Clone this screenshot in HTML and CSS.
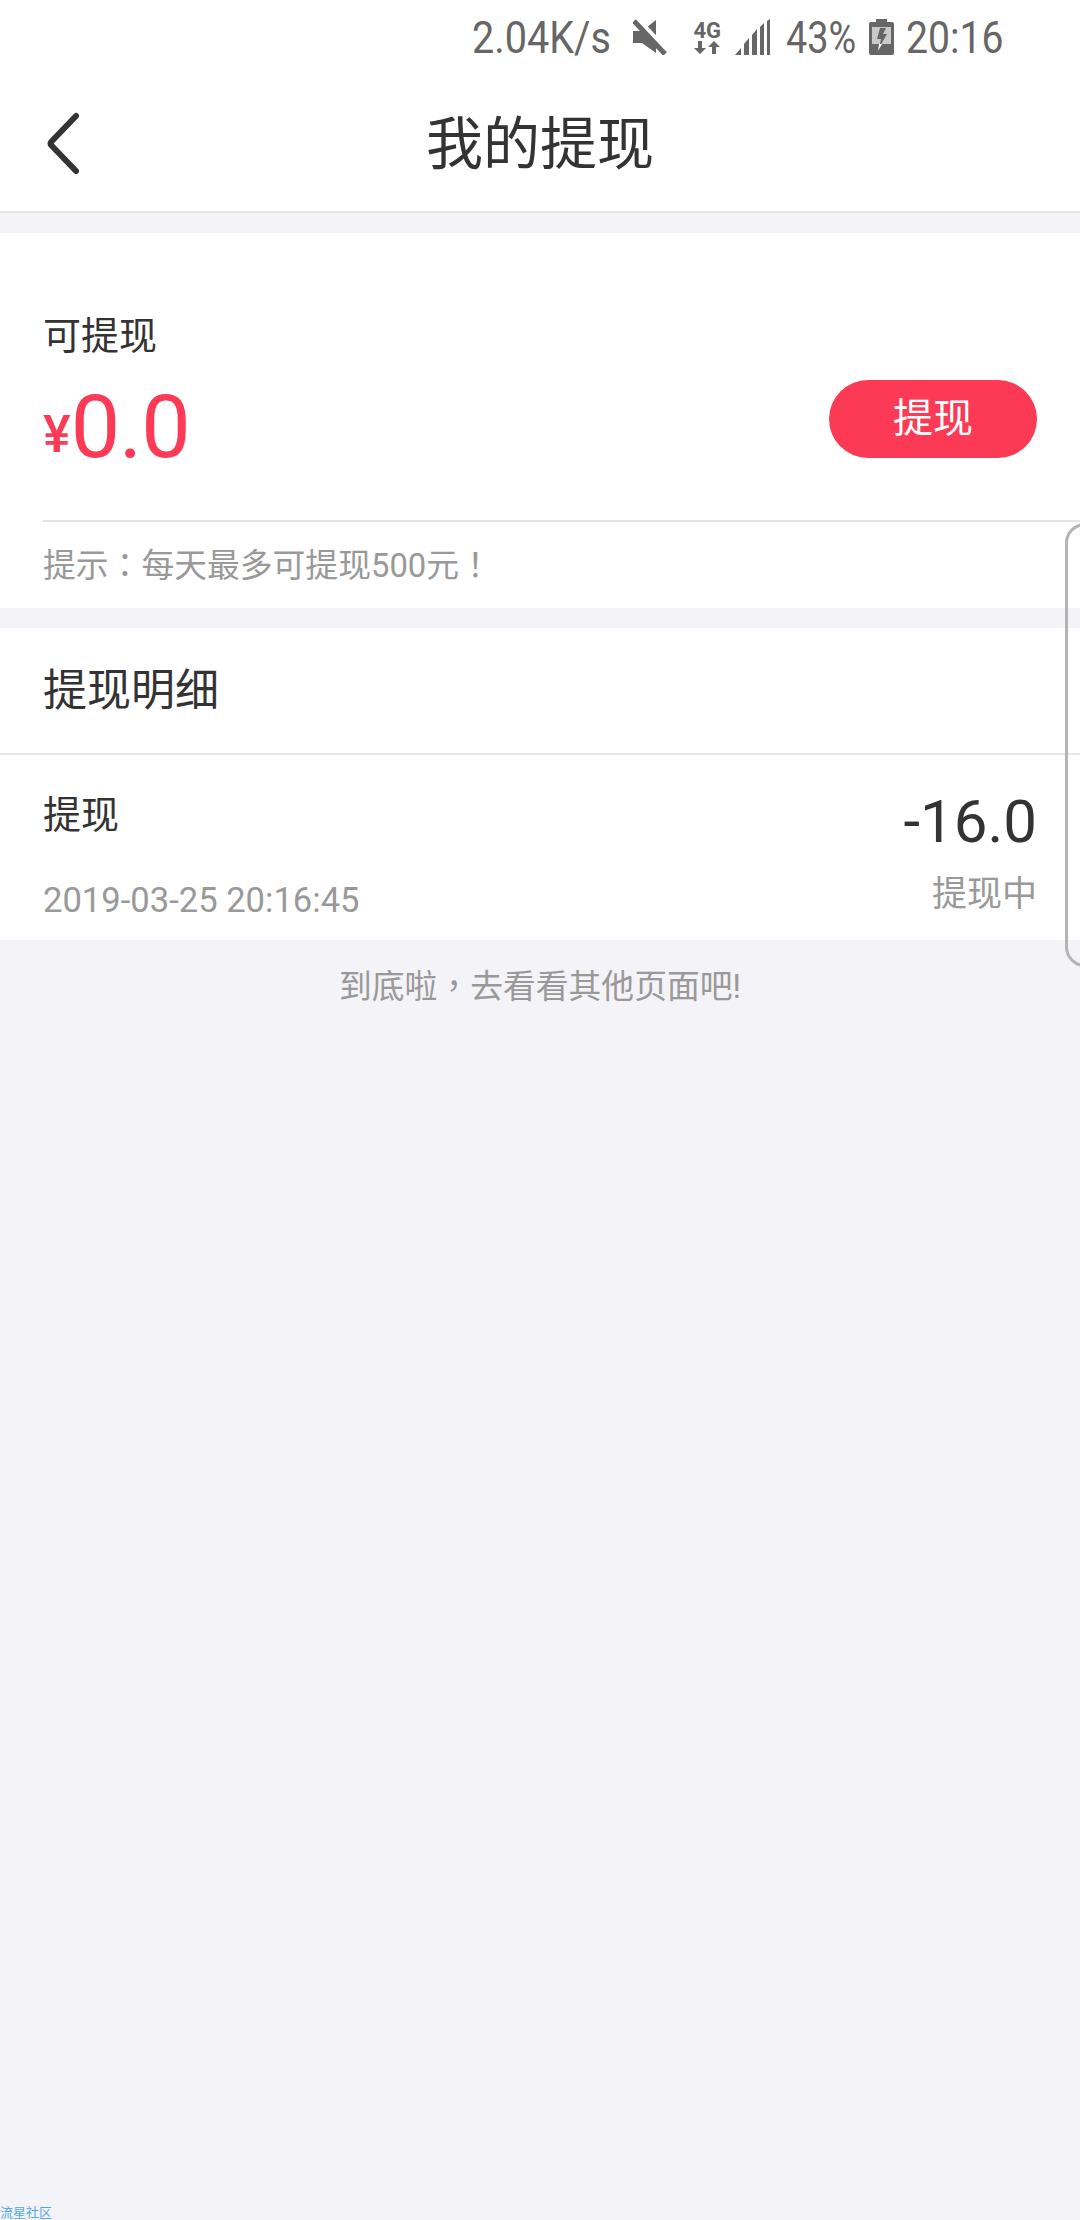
FILE: index.html
```html
<!doctype html>
<html>
  <head>
    <meta charset="utf-8">
    <title>我的提现</title>
    <link rel="stylesheet" href="styles.css">
  </head>
  <body>
    <div class="status">
      <span class="st-text speed">2.04K/s</span>
      <svg class="ic-mute" width="34" height="36" viewBox="0 0 34 36">
        <path d="M0 12h9L23 1v33L9 24H0z" fill="#666"/>
        <path d="M4 1l30 32" stroke="#fff" stroke-width="7"/>
        <path d="M1 2l31 33" stroke="#666" stroke-width="5"/>
      </svg>
      <div class="net">
        <span class="net-label">4G</span>
        <svg width="26" height="13" viewBox="0 0 26 13">
          <path d="M4 0h4v7h4l-6 6-6-6h4zM18 13h4V6h4l-6-6-6 6h4z" fill="#666"/>
        </svg>
      </div>
      <svg class="ic-signal" width="36" height="37" viewBox="0 0 36 37">
        <path d="M0 36l6-7v7zM9 25l5-6v17H9zM17 16l5-6v26h-5zM25 8l4-4v32h-4zM32 2l3-2v36h-3z" fill="#666"/>
      </svg>
      <span class="st-text pct">43%</span>
      <svg class="ic-batt" width="25" height="36" viewBox="0 0 25 36">
        <path d="M7 0h11v3h5q2 0 2 2v29q0 2-2 2H2q-2 0-2-2V5q0-2 2-2h5z" fill="#666"/>
        <rect x="3" y="8" width="19" height="17" fill="#c9c9c9"/>
        <path d="M11 9h6l-3 6h4l-8 14 2-9H8z" fill="#666"/>
        <path d="M10 25h3l-4 7z" fill="#fff"/>
      </svg>
      <span class="st-text time">20:16</span>
    </div>

    <header class="topbar">
      <svg class="back" width="36" height="64" viewBox="0 0 36 64">
        <path d="M32 4L7.5 29.5q-2 2 0 4L32 59" fill="none" stroke="#333" stroke-width="6" stroke-linecap="round" stroke-linejoin="round"/>
      </svg>
      <h1 class="title">我的提现</h1>
    </header>

    <section class="card">
      <div class="balance">
        <div>
          <div class="balance-label">可提现</div>
          <div class="amount"><span class="yen">¥</span>0.0</div>
        </div>
        <a class="btn">提现</a>
      </div>
      <div class="hint">提示<span class="punct">：</span>每天最多可提现500元<span class="punct">！</span></div>
    </section>

    <section class="detail">
      <h2 class="detail-title">提现明细</h2>
      <div class="record">
        <div>
          <div class="record-name">提现</div>
          <div class="record-date">2019-03-25 20:16:45</div>
        </div>
        <div class="record-right">
          <div class="record-money">-16.0</div>
          <div class="record-state">提现中</div>
        </div>
      </div>
    </section>

    <p class="end">到底啦<span class="punct">，</span>去看看其他页面吧!</p>

    <div class="edge"></div>
    <div class="mark">流星社区</div>
  </body>
</html>
```

FILE: styles.css
```css
* { box-sizing: border-box; }
html, body { margin: 0; padding: 0; }
body {
  position: relative;
  height: 2220px;
  overflow: hidden;
  background: #f3f3f8;
  color: #333;
  font-family: Roboto, "Noto Sans CJK SC", sans-serif;
}

.status {
  display: flex;
  align-items: center;
  justify-content: flex-end;
  height: 70px;
  padding: 4px 77px 0 0;
  background: #fff;
  color: #666;
  font-size: 45px;
}
/* phone status font is condensed, squeeze roboto into a fixed box */
.st-text { display: block; white-space: nowrap; transform-origin: left center; }
.speed { width: 139px; margin-right: 22px; transform: scaleX(.88); }
.pct { width: 70px; transform: scaleX(.84); }
.time { width: 97px; transform: scaleX(.87); }
.ic-mute { margin-right: 26px; }
.net { display: flex; flex-direction: column; align-items: center; margin-right: 14px; }
.net-label { font-weight: 700; font-size: 22px; line-height: 21px; }
.ic-signal { margin-right: 15px; }
.ic-batt { margin: 0 12px 0 13px; }

.topbar {
  position: relative;
  display: flex;
  align-items: center;
  justify-content: center;
  height: 143px;
  padding-top: 8px;
  background: #fff;
  border-bottom: 2px solid #e6e6e6;
}
.back { position: absolute; left: 44px; top: 42px; }
.title { margin: 0; font-size: 57px; font-weight: 400; line-height: 70px; }

.card { margin-top: 20px; background: #fff; }
.balance {
  display: flex;
  justify-content: space-between;
  height: 289px;
  margin-left: 43px;
  padding: 78px 43px 0 0;
  border-bottom: 2px solid #e4e4e4;
}
.balance-label { font-size: 38px; line-height: 50px; }
.amount { margin-top: 16px; color: #fd3a55; font-size: 88px; line-height: 100px; letter-spacing: -1px; }
.yen { font-size: 52px; font-weight: 500; vertical-align: 5px; letter-spacing: 0; }
.btn {
  width: 208px;
  height: 78px;
  margin-top: 69px;
  border-radius: 39px;
  background: #fd3a55;
  color: #fff;
  font-size: 40px;
  line-height: 78px;
  text-align: center;
}
.hint {
  height: 86px;
  padding-left: 43px;
  color: #999;
  font-size: 32.8px;
  line-height: 81px;
}
/* centered full-width punctuation */
.punct { font-family: "Noto Sans CJK TC", sans-serif; }

.detail { margin-top: 20px; background: #fff; }
.detail-title {
  margin: 0;
  height: 127px;
  padding-left: 43px;
  border-bottom: 2px solid #e6e6e6;
  font-size: 44px;
  font-weight: 400;
  line-height: 127px;
}
.record {
  display: flex;
  justify-content: space-between;
  height: 185px;
  padding: 0 43px;
}
.record-name { margin-top: 35px; font-size: 38px; line-height: 50px; }
.record-date { margin-top: 35px; color: #999; font-size: 34.6px; line-height: 50px; }
.record-right { text-align: right; }
.record-money { margin-top: 27px; font-size: 60px; line-height: 80px; }
.record-state { margin-top: 8px; color: #999; font-size: 35px; line-height: 50px; }

.end {
  margin: 21px 0 0;
  color: #999;
  font-size: 32.8px;
  line-height: 46px;
  text-align: center;
}

/* floating side handle */
.edge {
  position: absolute;
  left: 1065px;
  top: 523px;
  width: 40px;
  height: 444px;
  border: 3px solid #b4b4b4;
  border-radius: 20px;
  background: transparent;
}
.mark {
  position: absolute;
  left: 0;
  bottom: 0;
  color: #55a8e8;
  font-size: 13px;
  line-height: 15px;
}
```
